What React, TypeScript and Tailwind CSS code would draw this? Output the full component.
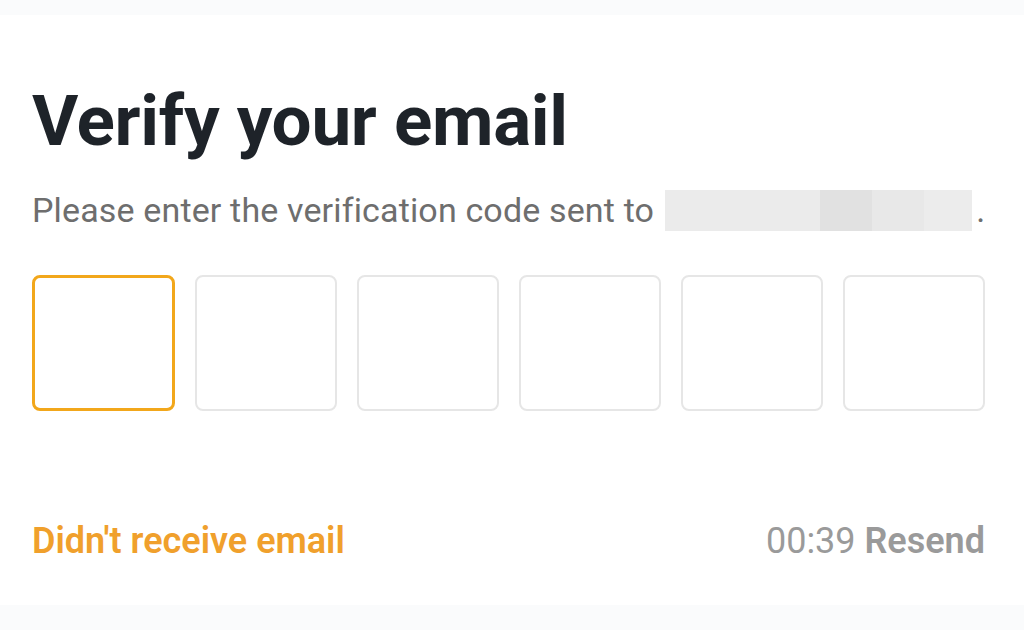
export default function App() {
  const boxes = [0, 1, 2, 3, 4, 5]

  return (
    <div className="h-[630px] w-[1024px] bg-[#fafbfc] flex flex-col" style={{ fontFamily: 'Roboto, "Noto Sans", sans-serif' }}>
      <div className="h-[15px] shrink-0" />
      <div className="h-[590px] bg-white px-[32px] pt-[70px] flex flex-col">
        <h1 className="text-[71px] leading-none font-bold text-[#1e2329] tracking-[-0.3px]">Verify your email</h1>

        <div className="mt-[33px] flex items-center text-[34px] leading-[42px] tracking-[0.15px] text-[#6e6e6e]">
          <span>Please enter the verification code sent to</span>
          <span className="ml-[11px] h-[41px] w-[307px] bg-[#ebebeb] flex">
            <span className="w-[155px]" />
            <span className="w-[52px] bg-[#e1e1e1]" />
            <span className="w-[52px] bg-[#e8e8e8]" />
            <span className="flex-1 bg-[#ececec]" />
          </span>
          <span className="ml-[4px]">.</span>
        </div>

        <div className="mt-[44px] flex gap-[20px]">
          {boxes.map((i) => (
            <div
              key={i}
              className={
                i === 0
                  ? "h-[136px] w-[143px] rounded-[8px] border-[3px] border-[#f2a71b]"
                  : "h-[136px] w-[142px] rounded-[8px] border-2 border-[#e6e6e6]"
              }
            />
          ))}
        </div>

        <div className="mt-[112px] pr-[7px] flex items-center justify-between text-[36px] leading-none">
          <button className="font-semibold text-[#f0a02c]">Didn't receive email</button>
          <div className="text-[#9a9a9a]">
            00:39 <span className="font-semibold">Resend</span>
          </div>
        </div>
      </div>
    </div>
  )
}
